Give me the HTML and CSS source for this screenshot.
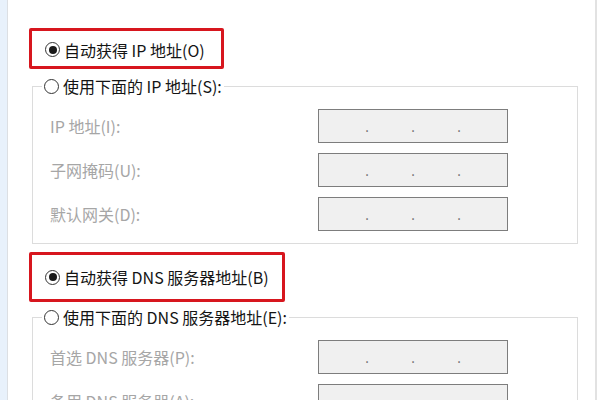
FILE: index.html
```html
<!DOCTYPE html>
<html lang="zh-CN">
<head>
  <meta charset="UTF-8" />
  <meta name="viewport" content="width=device-width, initial-scale=1.0"/>
  <title>Internet 协议版本 4 (TCP/IPv4) 属性</title>
  <link rel="stylesheet" href="styles.css">
</head>
<body>

<div class="window">
  <div class="edge"></div>
  <div class="panel">

    <label class="choice highlight first">
      <input type="radio" name="ip" checked>
      <span class="radio"></span>
      <span>自动获得 IP 地址(O)</span>
    </label>

    <fieldset class="group">
      <legend>
        <label class="choice">
          <input type="radio" name="ip">
          <span class="radio"></span>
          <span>使用下面的 IP 地址(S):</span>
        </label>
      </legend>
      <div class="rows">
        <span class="field-label">IP 地址(I):</span>
        <div class="ip-box"><span>.</span><span>.</span><span>.</span></div>
        <span class="field-label">子网掩码(U):</span>
        <div class="ip-box"><span>.</span><span>.</span><span>.</span></div>
        <span class="field-label">默认网关(D):</span>
        <div class="ip-box"><span>.</span><span>.</span><span>.</span></div>
      </div>
    </fieldset>

    <label class="choice highlight second">
      <input type="radio" name="dns" checked>
      <span class="radio"></span>
      <span>自动获得 DNS 服务器地址(B)</span>
    </label>

    <fieldset class="group group-dns">
      <legend>
        <label class="choice">
          <input type="radio" name="dns">
          <span class="radio"></span>
          <span>使用下面的 DNS 服务器地址(E):</span>
        </label>
      </legend>
      <div class="rows">
        <span class="field-label">首选 DNS 服务器(P):</span>
        <div class="ip-box"><span>.</span><span>.</span><span>.</span></div>
        <span class="field-label">备用 DNS 服务器(A):</span>
        <div class="ip-box"><span>.</span><span>.</span><span>.</span></div>
      </div>
    </fieldset>

  </div>
</div>

</body>
</html>
```

FILE: styles.css
```css
html, body {
  margin: 0;
  width: 600px;
  height: 400px;
  overflow: hidden;
  background: #fff;
}

body {
  font-family: 'Noto Sans CJK SC', 'Noto Sans', sans-serif;
  font-size: 16px;
  color: #141414;
}

.window {
  display: flex;
  height: 400px;
}

.edge {
  width: 7px;
  background: #e8f1fb;
  border-right: 1px solid #dcdfe3;
}

.panel {
  width: 567px;
  padding: 28px 0 0 20px;
  border-right: 2px solid #e2e2e2;
  display: flex;
  flex-direction: column;
  align-items: flex-start;
}

.panel > * {
  flex-shrink: 0;
}

/* radio rows */
.choice {
  display: flex;
  align-items: center;
  gap: 4px;
  line-height: 20px;
  white-space: nowrap;
}

.choice input {
  display: none;
}

.radio {
  width: 13px;
  height: 13px;
  border: 1.5px solid #333;
  border-radius: 50%;
  display: flex;
  align-items: center;
  justify-content: center;
  background: #fff;
}

.choice input:checked + .radio::after {
  content: "";
  width: 8px;
  height: 8px;
  border-radius: 50%;
  background: #1a1a1a;
}

.highlight {
  border: 3px solid #d7161e;
  border-radius: 2px;
  padding: 0 13px 0 13px;
  margin-left: 1px;
}

.highlight.first {
  height: 33px;
  width: 163px;
  padding-top: 2px;
}

.highlight.second {
  height: 44px;
  width: 224px;
  margin-top: 8px;
}

/* group boxes */
.group {
  margin: 7px 0 0 4px;
  padding: 0;
  width: 544px;
  border: 1px solid #dcdcdc;
}

.group legend {
  padding: 0 2px;
  margin-left: 9px;
}

.group-dns {
  margin-top: 5px;
}

.rows {
  display: grid;
  grid-template-columns: 268px 190px;
  row-gap: 10px;
  padding: 13px 0 12px 17px;
}

.field-label {
  color: #a6a6a6;
  align-self: center;
}

.ip-box {
  height: 32px;
  background: #f0f0f0;
  border: 1px solid #7d7d7d;
  display: flex;
  justify-content: center;
  align-items: center;
  color: #666;
  font-size: 13px;
}

.ip-box span {
  width: 46px;
  text-align: center;
}
```
